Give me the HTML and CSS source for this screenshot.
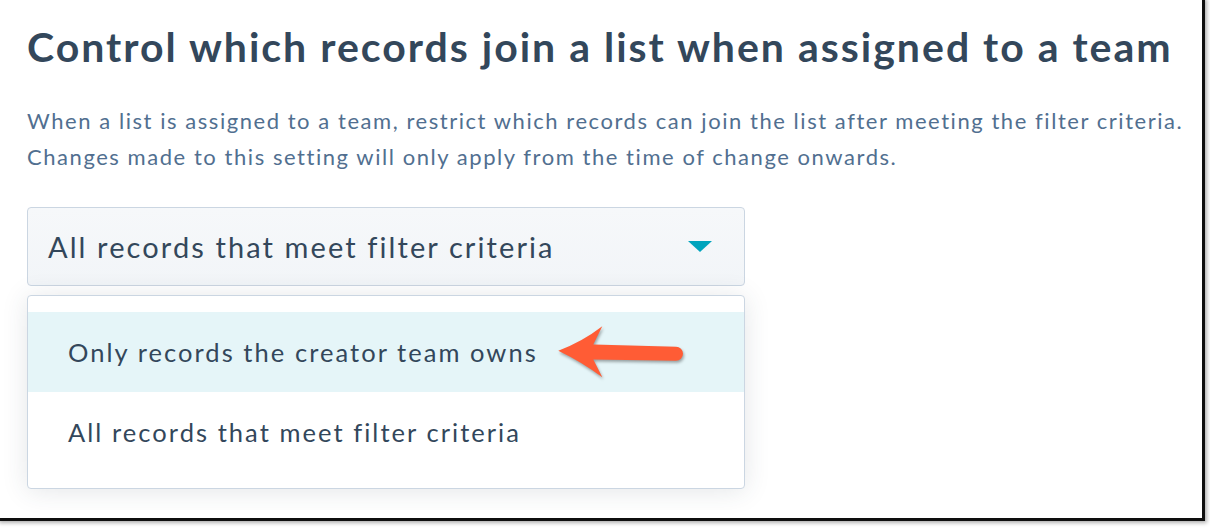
FILE: index.html
```html
<!DOCTYPE html>
<html lang="en">
<head>
<meta charset="utf-8">
<title>Team list settings</title>
<link rel="stylesheet" href="styles.css">
</head>
<body>
<div class="page">
  <div class="frame">
    <div class="content">
      <h1 class="title">Control which records join a list when assigned to a team</h1>
      <p class="desc">When a list is assigned to a team, restrict which records can join the list after meeting the filter criteria.<br>Changes made to this setting will only apply from the time of change onwards.</p>
      <div class="field">
        <div class="select">
          <span class="select-value">All records that meet filter criteria</span>
          <span class="caret"></span>
        </div>
        <div class="menu">
          <div class="option option-active">Only records the creator team owns</div>
          <div class="option">All records that meet filter criteria</div>
        </div>
        <svg class="arrow" width="150" height="80" viewBox="0 0 150 80" aria-hidden="true">
          <path d="M18.3 41.7 Q42 33 62.3 17.3 L53.3 35.5 L136 37.8 A7 7 0 0 1 136 51.8 L53.3 50.5 L62.3 68.3 Q42 53 18.3 41.7 Z" fill="#ff5c35"/>
        </svg>
      </div>
    </div>
  </div>
</div>
</body>
</html>
```
FILE: styles.css
```css
html, body {
  margin: 0;
  padding: 0;
  background: #ffffff;
  overflow: hidden;
}

.page {
  width: 1210px;
  height: 528px;
  background: #ffffff;
}

.frame {
  width: 1202px;
  height: 518px;
  background: #ffffff;
  box-shadow: 0 0 0.5px 3px rgba(0, 0, 0, 0.92), 2px 2px 4px 3px rgba(0, 0, 0, 0.3);
  overflow: hidden;
}

.content {
  padding: 22px 0 0 27px;
  font-family: "Lato", "Liberation Sans", sans-serif;
}

.title {
  margin: 0;
  font-size: 41px;
  line-height: 49px;
  font-weight: 700;
  letter-spacing: 2px;
  color: #33475b;
  white-space: nowrap;
}

.desc {
  margin: 32px 0 0 0;
  font-size: 22px;
  line-height: 36px;
  letter-spacing: 1.55px;
  color: #516f90;
  white-space: nowrap;
}

.field {
  position: relative;
  width: 718px;
  margin-top: 32px;
}

.select {
  display: flex;
  align-items: center;
  justify-content: space-between;
  height: 77px;
  padding: 0 32px 0 20px;
  border: 1px solid #cbd6e2;
  border-radius: 4px;
  background: linear-gradient(#f6f8fa, #f2f5f8);
}

.select-value {
  font-size: 29px;
  line-height: 77px;
  letter-spacing: 2.1px;
  color: #33475b;
}

.caret {
  width: 0;
  height: 0;
  border-left: 12px solid transparent;
  border-right: 12px solid transparent;
  border-top: 11px solid #00a4bd;
}

.menu {
  margin-top: 9px;
  padding: 16px 0;
  border: 1px solid #cbd6e2;
  border-radius: 4px;
  background: #ffffff;
  box-shadow: 0 2px 26px rgba(45, 62, 80, 0.13);
}

.option {
  height: 80px;
  padding-left: 40px;
  font-size: 25.5px;
  line-height: 80px;
  letter-spacing: 2.05px;
  color: #33475b;
}

.option-active {
  background: #e5f5f8;
}

.arrow {
  position: absolute;
  left: 513px;
  top: 102px;
  filter: drop-shadow(1px 2px 1.5px rgba(0, 0, 0, 0.35));
}
```
